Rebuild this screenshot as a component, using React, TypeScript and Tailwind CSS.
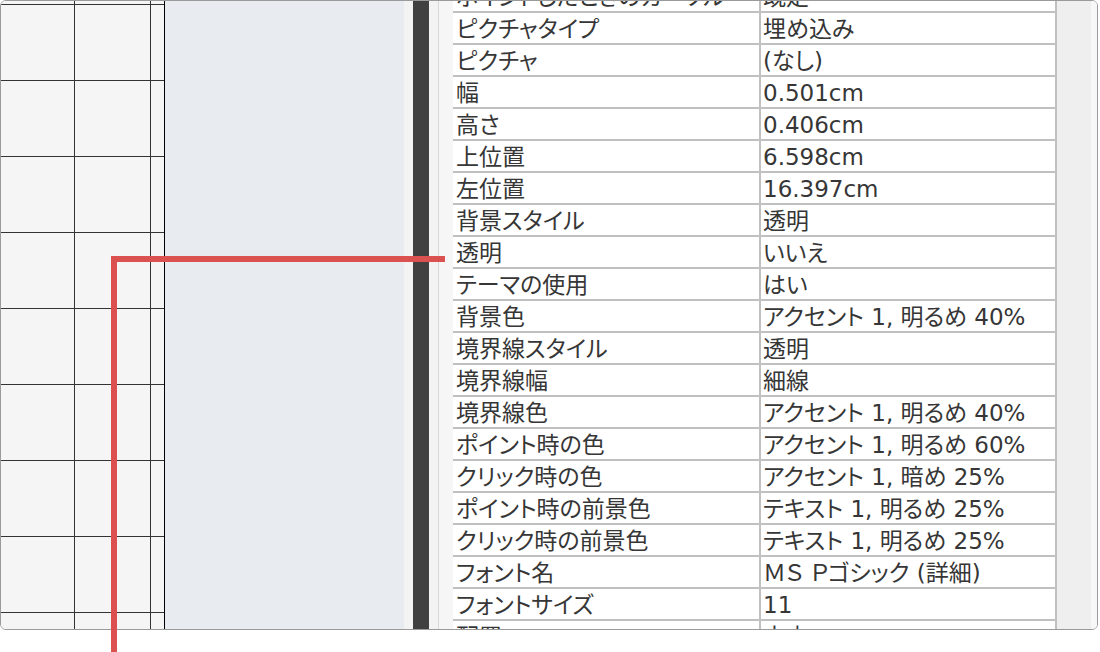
const rows: [string, string][] = [
  ['ポイントしたときのカーソル', '既定'],
  ['ピクチャタイプ', '埋め込み'],
  ['ピクチャ', '(なし)'],
  ['幅', '0.501cm'],
  ['高さ', '0.406cm'],
  ['上位置', '6.598cm'],
  ['左位置', '16.397cm'],
  ['背景スタイル', '透明'],
  ['透明', 'いいえ'],
  ['テーマの使用', 'はい'],
  ['背景色', 'アクセント 1, 明るめ 40%'],
  ['境界線スタイル', '透明'],
  ['境界線幅', '細線'],
  ['境界線色', 'アクセント 1, 明るめ 40%'],
  ['ポイント時の色', 'アクセント 1, 明るめ 60%'],
  ['クリック時の色', 'アクセント 1, 暗め 25%'],
  ['ポイント時の前景色', 'テキスト 1, 明るめ 25%'],
  ['クリック時の前景色', 'テキスト 1, 明るめ 25%'],
  ['フォント名', 'ＭＳ Ｐゴシック (詳細)'],
  ['フォントサイズ', '11'],
  ['配置', '中央'],
]

const GridPanel = () => (
  <div className="h-full w-[164px] shrink-0 overflow-hidden border-r border-black bg-[#f5f5f5]">
    <div className="-mt-[72px] flex flex-col">
      {Array.from({ length: 10 }).map((_, i) => (
        <div key={i} className="flex h-[76px] shrink-0 border-b border-[#333]">
          <div className="w-[74px] border-r border-[#333]" />
          <div className="w-[76px] border-r border-[#333]" />
          <div className="flex-1" />
        </div>
      ))}
    </div>
  </div>
)

const PropertyTable = () => (
  <div className="h-full w-[604px] shrink-0 overflow-hidden border-r-2 border-[#c0c0c0] bg-white">
    <div className="-mt-[20px] flex flex-col">
      {rows.map(([name, value]) => (
        <div key={name} className="flex h-[32px] shrink-0 border-b-2 border-[#c0c0c0]">
          <div className="flex w-[308px] items-center whitespace-nowrap border-r-2 border-[#c0c0c0] pl-[3px] pt-[2px]">
            {name}
          </div>
          <div className="flex flex-1 items-center whitespace-nowrap pl-[2px] pt-[2px]">{value}</div>
        </div>
      ))}
    </div>
  </div>
)

export default function App() {
  return (
    <div
      className="relative h-[652px] w-[1100px] overflow-hidden bg-white text-[23px] leading-none text-[#363636] [font-feature-settings:'palt']"
      style={{ fontFamily: '"DejaVu Sans", "Noto Sans CJK JP", sans-serif' }}
    >
      <div className="flex h-[630px] w-[1098px] overflow-hidden rounded-[6px] border border-[#9a9a9a]">
        <GridPanel />
        <div className="w-[239px] shrink-0 bg-[#e8ecf0]" />
        <div className="w-[9px] shrink-0 bg-[#f3f3f3]" />
        <div className="w-[16px] shrink-0 bg-[#404040]" />
        <div className="w-[10px] shrink-0 border-r border-[#d8d8d8] bg-[#f3f3f3]" />
        <div className="w-[14px] shrink-0 bg-[#f6f6f6]" />
        <PropertyTable />
        <div className="flex flex-1 justify-end bg-[#efefef]">
          <div className="w-[6px] bg-[#f7f7f7]" />
        </div>
      </div>

      {/* red callout line */}
      <div className="absolute left-[111px] top-[256px] h-[6px] w-[334px] bg-[#db514f]" />
      <div className="absolute bottom-0 left-[111px] top-[256px] w-[6px] bg-[#db514f]" />
    </div>
  )
}
